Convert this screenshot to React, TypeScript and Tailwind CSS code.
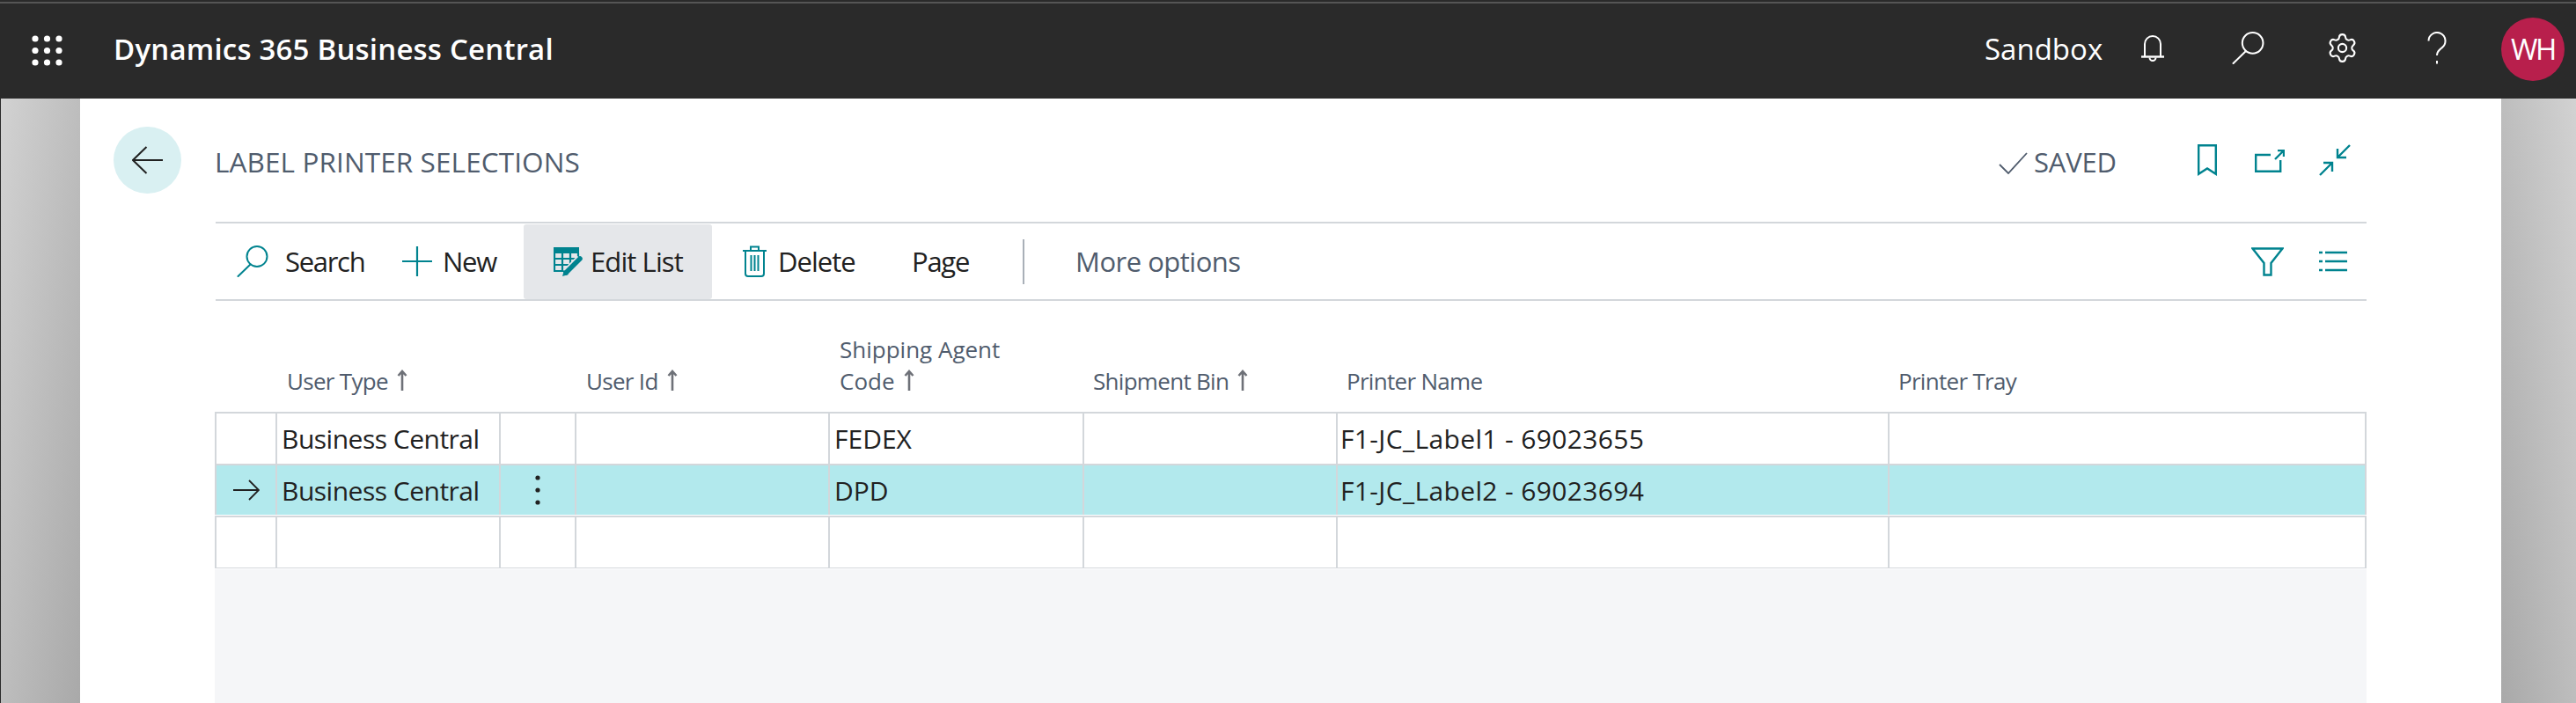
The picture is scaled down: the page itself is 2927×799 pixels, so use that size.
const FONT = "font-['Open_Sans','Noto_Sans',sans-serif]"

const TEAL = "#00838f"

function SearchIcon({ color, className }: { color: string; className?: string }) {
  return (
    <svg viewBox="0 0 36 36" fill="none" stroke={color} strokeWidth="2" className={className}>
      <circle cx="23" cy="12.5" r="11.5" />
      <path d="M15.5 21.5 1.5 35" strokeLinecap="round" />
    </svg>
  )
}

function AppsIcon() {
  const dots = [4, 17.5, 31]
  return (
    <svg viewBox="0 0 35 35" fill="#fff" className="w-[35px] h-[35px]">
      {dots.map((y) => dots.map((x) => <circle key={`${x}-${y}`} cx={x} cy={y} r="3.6" />))}
    </svg>
  )
}

function BellIcon() {
  return (
    <svg viewBox="0 0 28 32" fill="none" stroke="#fff" strokeWidth="2" className="w-[28px] h-[32px]">
      <path d="M5 25V11a9 9 0 0 1 18 0v14" />
      <path d="M1 25.5h26" strokeWidth="2.4" />
      <path d="M10.5 26.5a3.5 3.5 0 0 0 7 0" />
    </svg>
  )
}

function GearIcon() {
  return (
    <svg viewBox="0 0 24 24" fill="none" stroke="#fff" strokeWidth="1.35" className="w-[37px] h-[37px]">
      <path d="M9.671 4.136a2.34 2.34 0 0 1 4.659 0 2.34 2.34 0 0 0 3.319 1.915 2.34 2.34 0 0 1 2.33 4.033 2.34 2.34 0 0 0 0 3.831 2.34 2.34 0 0 1-2.33 4.033 2.34 2.34 0 0 0-3.319 1.915 2.34 2.34 0 0 1-4.659 0 2.34 2.34 0 0 0-3.32-1.915 2.34 2.34 0 0 1-2.33-4.033 2.34 2.34 0 0 0 0-3.831A2.34 2.34 0 0 1 6.35 6.051a2.34 2.34 0 0 0 3.319-1.915" />
      <circle cx="12" cy="12" r="3" />
    </svg>
  )
}

function HelpIcon() {
  return (
    <svg viewBox="0 0 22 37" fill="none" stroke="#fff" strokeWidth="2" className="w-[22px] h-[37px]">
      <path d="M1.5 10.5a9.5 9.5 0 1 1 15.5 7.4c-3.5 3-6 4.6-6 9" />
      <path d="M11 33v3.5" />
    </svg>
  )
}

function TopBar() {
  return (
    <header className="h-[112px] bg-[#2a2a2a] relative flex items-center shrink-0">
      <div className="absolute left-0 right-0 top-[2px] h-[2px] bg-[#555555]" />
      <div className="ml-[36px] mt-[2px]">
        <AppsIcon />
      </div>
      <span className="ml-[58px] text-[33px] font-semibold text-white tracking-[.2px] whitespace-nowrap">
        Dynamics 365 Business Central
      </span>
      <div className="ml-auto flex items-center mr-[13px]">
        <span className="text-[33px] text-white w-[137px] whitespace-nowrap">Sandbox</span>
        <div className="ml-[40px] -mt-[2px]">
          <BellIcon />
        </div>
        <SearchIcon color="#fff" className="ml-[76px] -mt-[4px] w-[37px] h-[37px]" />
        <div className="ml-[70px] -mt-[4px]">
          <GearIcon />
        </div>
        <div className="ml-[78px] -mt-[4px]">
          <HelpIcon />
        </div>
        <div className="ml-[62px] w-[72px] h-[72px] rounded-full bg-[#b81f4c] flex items-center justify-center text-[33px] text-white tracking-[-2.5px]">
          WH
        </div>
      </div>
    </header>
  )
}

function TitleRow() {
  return (
    <div className="h-[140px] flex items-center pl-[38px] pr-[171px]">
      <div className="w-[77px] h-[76px] rounded-full bg-[#d9f0f2] flex items-center justify-center">
        <svg viewBox="0 0 36 32" fill="none" stroke="#212121" strokeWidth="2" className="w-[36px] h-[32px]">
          <path d="M35 16H1M16.5 1 1 16l15.5 15" />
        </svg>
      </div>
      <span className="ml-[38px] mt-[4px] text-[31.5px] text-[#505c6d] tracking-[.1px] whitespace-nowrap">
        LABEL PRINTER SELECTIONS
      </span>
      <div className="ml-auto flex items-center">
        <svg viewBox="0 0 33 25" fill="none" stroke="#505c6d" strokeWidth="1.8" className="w-[33px] h-[25px] mt-[6px]">
          <path d="M1 14l10 10L32 1" />
        </svg>
        <span className="ml-[7px] w-[92px] mt-[4px] text-[31px] text-[#505c6d] tracking-[-.2px] whitespace-nowrap">
          SAVED
        </span>
        <svg viewBox="0 0 22 36" fill="none" stroke={TEAL} strokeWidth="2.4" className="ml-[94px] w-[22px] h-[36px]">
          <path d="M1.2 1.2h19.6v32.6L11 27.5 1.2 33.8z" />
        </svg>
        <svg viewBox="0 0 34 26" fill="none" stroke={TEAL} strokeWidth="2.4" className="ml-[43px] w-[34px] h-[26px] mt-[1px]">
          <path d="M18 6H1.2v18.8h28V12M23 11 33 1M26 1h7v7" />
        </svg>
        <svg viewBox="0 0 36 36" fill="none" stroke={TEAL} strokeWidth="2.4" className="ml-[39px] w-[36px] h-[36px]">
          <path d="M35 1 21 15M21 5v10h10M1 35l14-14M5 21h10v10" />
        </svg>
      </div>
    </div>
  )
}

function Toolbar() {
  return (
    <div className="ml-[154px] w-[2444px] h-[90px] border-y-2 border-[#d3d7db] flex items-center pl-[24px] pr-[22px] text-[31px] text-[#212121] whitespace-nowrap">
      <SearchIcon color={TEAL} className="w-[36px] h-[36px]" />
      <span className="ml-[19px] w-[90px] tracking-[-1.3px]">Search</span>
      <svg viewBox="0 0 34 34" fill="none" stroke={TEAL} strokeWidth="2.2" className="ml-[43px] w-[34px] h-[34px]">
        <path d="M0 17h34M17 0v34" />
      </svg>
      <span className="ml-[12px] w-[62px] tracking-[-1.3px]">New</span>
      <div className="ml-[30px] w-[214px] h-[85px] -mb-[1px] bg-[#e5e7ea] rounded-[3px] flex items-center pl-[34px]">
        <svg viewBox="0 0 34 33" className="w-[34px] h-[33px]">
          <path d="M0 0h29v7H0z" fill={TEAL} />
          <path
            d="M1 7v20h12M28 7v4M1 13h24M1 20h16M10 7v20M19 7v12"
            fill="none"
            stroke={TEAL}
            strokeWidth="2.2"
          />
          <path d="M14 29 30 13" stroke="#e5e7ea" strokeWidth="9" />
          <path d="M14 29 30 13" stroke={TEAL} strokeWidth="5.5" strokeLinecap="round" />
          <path d="M10 33l2-7 5 5z" fill={TEAL} />
        </svg>
        <span className="ml-[8px] tracking-[-.9px]">Edit List</span>
      </div>
      <svg viewBox="0 0 27 36" fill="none" stroke={TEAL} strokeWidth="2" className="ml-[35px] w-[27px] h-[36px]">
        <path d="M0 6h27M9 6V1.5h9V6M3 6v26a3 3 0 0 0 3 3h15a3 3 0 0 0 3-3V6M9.5 11v18M13.5 11v18M17.5 11v18" />
      </svg>
      <span className="ml-[13px] w-[89px] tracking-[-1px]">Delete</span>
      <span className="ml-[63px] w-[64px] tracking-[-1.25px]">Page</span>
      <div className="ml-[62px] w-[2px] h-[51px] bg-[#a9b0b8]" />
      <span className="ml-[58px] text-[#505c6d] tracking-[-.5px]">More options</span>
      <svg viewBox="0 0 37 33" fill="none" stroke={TEAL} strokeWidth="2.4" className="ml-auto w-[37px] h-[33px]">
        <path d="M1.5 1.5h34L22.5 18v13.5h-8V18z" />
      </svg>
      <svg viewBox="0 0 32 24" fill="none" stroke={TEAL} strokeWidth="2.4" className="ml-[40px] w-[32px] h-[24px]">
        <path d="M0 2h4M7 2h25M0 12h4M7 12h25M0 22h4M7 22h25" />
      </svg>
    </div>
  )
}

const COLS = "grid grid-cols-[69px_254px_86px_288px_289px_288px_627px_544px]"

const HEADERS: { label: string[]; sort?: boolean; pl: string; track?: string }[] = [
  { label: ["User Type"], sort: true, pl: "pl-[13px]" },
  { label: [""], pl: "" },
  { label: ["User Id"], sort: true, pl: "pl-[13px]" },
  { label: ["Shipping Agent", "Code"], sort: true, pl: "pl-[13px]", track: "tracking-[0px]" },
  { label: ["Shipment Bin"], sort: true, pl: "pl-[12px]" },
  { label: ["Printer Name"], pl: "pl-[12px]" },
  { label: ["Printer Tray"], pl: "pl-[12px]" },
]

function SortArrow() {
  return (
    <svg viewBox="0 0 12 24" className="inline-block ml-[10px] w-[12px] h-[24px] align-[-1px]" fill="none" stroke="#6e7178" strokeWidth="2.6">
      <path d="M6 24V2M1.5 7 6 2l4.5 5" />
    </svg>
  )
}

function HeaderRow() {
  return (
    <div className={`${COLS} h-[126px] items-end pb-[17px] text-[26px] leading-[36px] text-[#505c6d] tracking-[-.7px] whitespace-nowrap`}>
      <div />
      {HEADERS.map((h, i) => (
        <div key={i} className={`${h.pl} ${h.track ?? ""}`}>
          {h.label.map((line, j) => (
            <div key={j}>
              {line}
              {h.sort && j === h.label.length - 1 && <SortArrow />}
            </div>
          ))}
        </div>
      ))}
    </div>
  )
}

type Row = { type: string; agent: string; printer: string; active?: boolean }

const ROWS: Row[] = [
  { type: "Business Central", agent: "FEDEX", printer: "F1-JC_Label1 - 69023655" },
  { type: "Business Central", agent: "DPD", printer: "F1-JC_Label2 - 69023694", active: true },
  { type: "", agent: "", printer: "" },
]

function TableRow({ row }: { row: Row }) {
  const cell = "border-l-2 border-[#d3d7db] flex items-center min-w-0"
  return (
    <div
      className={`${COLS} border-t-2 border-[#d3d7db] text-[30px] text-[#212121] font-[370] whitespace-nowrap ${
        row.active ? "h-[58px] mb-[1px] bg-[#b2e9ed]" : "h-[59px] bg-white"
      }`}
    >
      <div className={cell}>
        {row.active && (
          <svg viewBox="0 0 30 24" fill="none" stroke="#212121" strokeWidth="1.8" className="ml-[19px] w-[30px] h-[24px]">
            <path d="M0 12h29M18 1l11 11-11 11" />
          </svg>
        )}
      </div>
      <div className={`${cell} pl-[5px] tracking-[-.5px]`}>{row.type}</div>
      <div className={`${cell} justify-center`}>
        {row.active && (
          <svg viewBox="0 0 6 34" fill="#212121" className="w-[6px] h-[34px]">
            <circle cx="3" cy="3" r="2.6" />
            <circle cx="3" cy="17" r="2.6" />
            <circle cx="3" cy="31" r="2.6" />
          </svg>
        )}
      </div>
      <div className={cell} />
      <div className={`${cell} pl-[5px]`}>{row.agent}</div>
      <div className={cell} />
      <div className={`${cell} pl-[3px] tracking-[.35px]`}>{row.printer}</div>
      <div className={`${cell} border-r-2`} />
    </div>
  )
}

export default function App() {
  return (
    <div className={`w-[2927px] h-[799px] overflow-hidden flex flex-col ${FONT}`}>
      <TopBar />
      <div className="flex-1 flex min-h-0">
        <div className="w-[91px] border-l-[1px] border-[#2a2a2a] bg-gradient-to-br from-[#d2d2d2] to-[#a9a9a9]" />
        <main className="flex-1 bg-white flex flex-col min-w-0">
          <TitleRow />
          <Toolbar />
          <div className="ml-[153px] w-[2445px] flex-1 flex flex-col">
            <HeaderRow />
            {ROWS.map((r, i) => (
              <TableRow key={i} row={r} />
            ))}
            <div className="border-t border-[#d3d7db] pt-[1px] flex-1 flex flex-col">
              <div className="flex-1 bg-[#f5f6f8]" />
            </div>
          </div>
        </main>
        <div className="w-[85px] bg-gradient-to-tr from-[#a9a9a9] to-[#d2d2d2]" />
      </div>
    </div>
  )
}
